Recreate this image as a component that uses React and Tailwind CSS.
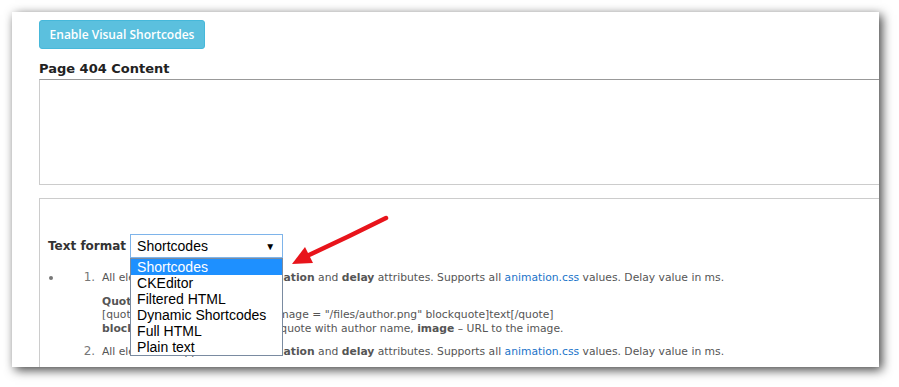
import React from 'react'

const formats = ['Shortcodes', 'CKEditor', 'Filtered HTML', 'Dynamic Shortcodes', 'Full HTML', 'Plain text']

// red pointer drawn over the page, coordinates in page pixels
function Arrow() {
  return (
    <svg className="absolute left-0 top-0 pointer-events-none z-20" width="867" height="355" viewBox="12 12 867 355" fill="none">
      <path d="M386 218 C360 231 335 243 309 255" stroke="#e8141b" strokeWidth="4.5" strokeLinecap="round" />
      <path d="M292 264 L305 247 L313 263 Z" fill="#e8141b" />
    </svg>
  )
}

function FormatSelect() {
  return (
    <div className="relative">
      <div className="w-[153px] h-[24px] border border-[#7eb4ea] bg-white flex items-center justify-between pl-[6px] pr-[7px] text-[14px] text-black font-['Liberation_Sans',Arial,sans-serif]">
        <span>Shortcodes</span>
        <span className="text-[10px]">▼</span>
      </div>
      <ul className="absolute left-0 top-[24px] w-[153px] border border-[#7a8ba1] bg-white z-10 text-[14px] font-['Liberation_Sans',Arial,sans-serif] text-black">
        {formats.map((f, i) => (
          <li key={f} className={`h-[16px] leading-[16px] pl-[6px] ${i === 0 ? 'bg-[#1e90ff] text-white' : ''}`}>
            {f}
          </li>
        ))}
      </ul>
    </div>
  )
}

export default function App() {
  return (
    <div className="w-[899px] h-[387px] bg-white pt-[12px] pl-[12px]">
      <div className="relative w-[867px] h-[355px] bg-white overflow-hidden shadow-[3px_3px_10px_rgba(0,0,0,0.75)] font-['DejaVu_Sans',Verdana,sans-serif]">
        <div className="pl-[27px] pt-[8px]">
          <button className="block h-[29px] w-[166px] rounded-[3px] bg-[#5bc0de] border border-[#46b8da] text-white text-[12px] font-semibold whitespace-nowrap font-['Open_Sans',sans-serif]">
            Enable Visual Shortcodes
          </button>

          <div className="mt-[12px] text-[13px] font-bold text-[#222] leading-[16px]">Page 404 Content</div>
          <div className="mt-[2px] w-[900px] h-[106px] border border-[#ccc] border-t-[#999]" />

          <div className="mt-[13px] w-[900px] h-[200px] border border-[#ccc] pl-[8px] pt-[35px]">
            <div className="flex items-center gap-[4px]">
              <span className="text-[12px] font-bold text-[#333]">Text format</span>
              <FormatSelect />
            </div>

            <ul className="mt-[13px] list-disc pl-[3px] text-[10.75px] leading-[13.5px] text-[#555] marker:text-[#777] marker:text-[12px]">
              <li className="ml-[12px]">
                <ol className="list-decimal pl-[36px]">
                  <li className="pl-[3px]">
                    <div>
                      All elements support <b>class</b>, <b>animation</b> and <b>delay</b> attributes. Supports all{' '}
                      <span className="text-[#1a73c9]">animation.css</span> values. Delay value in ms.
                    </div>
                    <div className="mt-[10px]">
                      <div className="font-bold">Quote</div>
                      <div>[quote author = "Author name" image = "/files/author.png" blockquote]text[/quote]</div>
                      <div>
                        <b>blockquote</b> – display the styled quote with author name, <b>image</b> – URL to the image.
                      </div>
                    </div>
                  </li>
                  <li className="pl-[3px] mt-[10px]">
                    All elements support <b>class</b>, <b>animation</b> and <b>delay</b> attributes. Supports all{' '}
                    <span className="text-[#1a73c9]">animation.css</span> values. Delay value in ms.
                  </li>
                </ol>
              </li>
            </ul>
          </div>
        </div>
        <Arrow />
      </div>
    </div>
  )
}
